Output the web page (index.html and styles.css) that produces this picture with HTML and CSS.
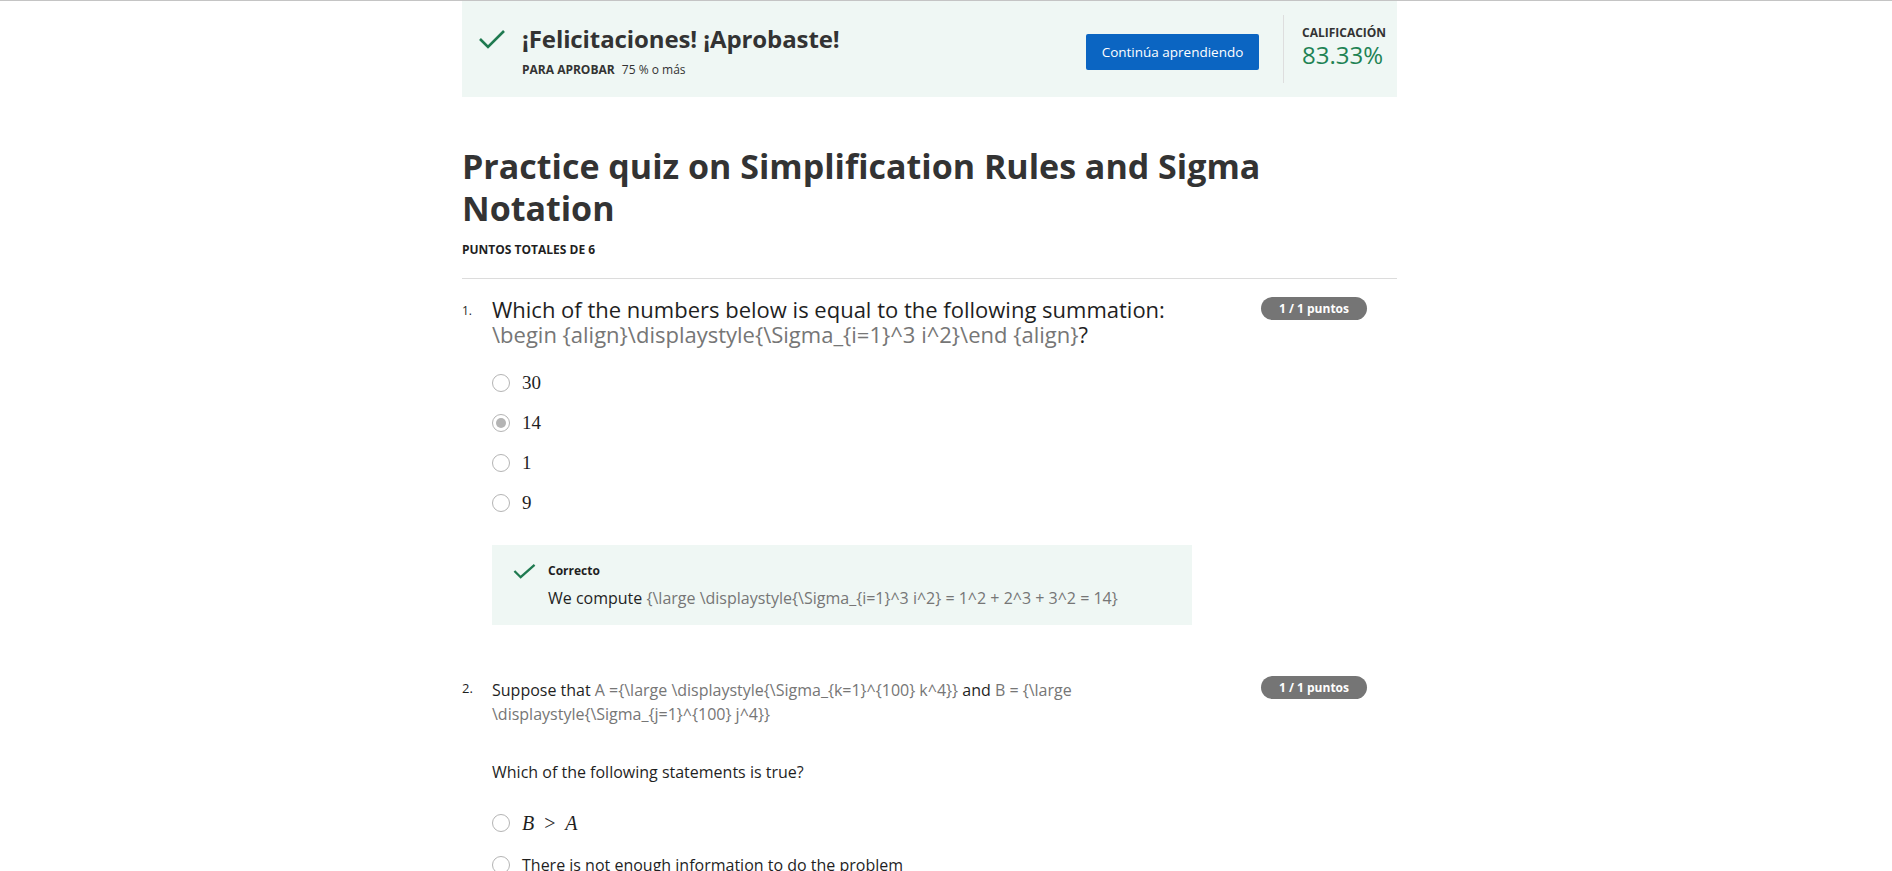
FILE: index.html
```html
<!DOCTYPE html>
<html lang="es">
<head>
<meta charset="utf-8">
<title>Practice quiz</title>
<link rel="stylesheet" href="styles.css">
</head>
<body>
<div class="topline"></div>
<main class="page">
  <section class="banner">
    <div class="banner-left">
      <svg class="check" viewBox="0 0 28 20" width="28" height="20"><polyline points="2,10 10,18 26,2" fill="none" stroke="#1f7a50" stroke-width="2.6"/></svg>
      <div>
        <h2 class="banner-title">¡Felicitaciones! ¡Aprobaste!</h2>
        <div class="banner-sub"><b>PARA APROBAR</b> 75 % o más</div>
      </div>
    </div>
    <div class="banner-right">
      <button class="btn">Continúa aprendiendo</button>
      <div class="vsep"></div>
      <div class="grade">
        <div class="grade-label">CALIFICACIÓN</div>
        <div class="grade-value">83.33%</div>
      </div>
    </div>
  </section>

  <h1 class="title">Practice quiz on Simplification Rules and Sigma Notation</h1>
  <div class="total">PUNTOS TOTALES DE 6</div>
  <hr class="rule">

  <section class="question">
    <div class="qnum">1.</div>
    <div class="qbody">
      <div class="qhead">
        <p class="qtext big">Which of the numbers below is equal to the following summation: <span class="tex">\begin {align}\displaystyle{\Sigma_{i=1}^3 i^2}\end {align}</span>?</p>
        <span class="badge">1 / 1 puntos</span>
      </div>
      <ul class="options">
        <li><span class="radio"></span><span class="math">30</span></li>
        <li><span class="radio checked"></span><span class="math">14</span></li>
        <li><span class="radio"></span><span class="math">1</span></li>
        <li><span class="radio"></span><span class="math">9</span></li>
      </ul>
      <div class="feedback">
        <div class="fb-head">
          <svg class="fb-check" viewBox="0 0 24 16" width="23" height="16"><polyline points="1.5,8 8,14.5 22.5,1.5" fill="none" stroke="#1f7a50" stroke-width="2.4"/></svg>
          <span class="fb-label">Correcto</span>
        </div>
        <p class="fb-text">We compute <span class="tex">{\large \displaystyle{\Sigma_{i=1}^3 i^2} = 1^2 + 2^3 + 3^2 = 14}</span></p>
      </div>
    </div>
  </section>

  <section class="question q2">
    <div class="qnum">2.</div>
    <div class="qbody">
      <div class="qhead">
        <p class="qtext">Suppose that <span class="tex">A ={\large \displaystyle{\Sigma_{k=1}^{100} k^4}}</span> and <span class="tex">B = {\large \displaystyle{\Sigma_{j=1}^{100} j^4}}</span></p>
        <span class="badge">1 / 1 puntos</span>
      </div>
      <p class="qtext ask">Which of the following statements is true?</p>
      <ul class="options opts2">
        <li><span class="radio"></span><span class="math it">B <span class="rel">&gt;</span> A</span></li>
        <li><span class="radio"></span><span class="plain">There is not enough information to do the problem</span></li>
      </ul>
    </div>
  </section>
</main>
</body>
</html>
```
FILE: styles.css
```css
* { box-sizing: border-box; }
html, body { margin: 0; padding: 0; background: #fff; }
body {
  font-family: "Open Sans", "Liberation Sans", sans-serif;
  color: #1f1f1f;
  overflow: hidden;
  height: 871px;
}
.topline { height: 1px; background: #c4c4c4; }
.page { width: 935px; margin-left: 462px; }

.banner {
  background: #eff7f4;
  height: 96px;
  display: flex;
  justify-content: space-between;
  align-items: center;
}
.banner-left { display: flex; align-items: flex-start; padding-left: 16px; padding-top: 2px; }
.check { margin-top: 6px; margin-right: 16px; }
.banner-title { margin: 0; font-size: 24px; font-weight: 700; color: #333; line-height: 32px; letter-spacing: -0.1px; }
.banner-sub { font-size: 12px; color: #333; margin-top: 6px; }
.banner-sub b { font-weight: 700; margin-right: 4px; }
.banner-right { display: flex; align-items: center; height: 100%; }
.btn {
  background: #0b65c2;
  color: #fff;
  border: 0;
  border-radius: 2px;
  width: 173px;
  height: 36px;
  font-family: "Open Sans", sans-serif;
  font-size: 13.5px;
  font-weight: 400;
  padding: 0;
  margin-top: 6px;
}
.vsep { width: 1px; height: 68px; background: #dedede; margin: 0 18px 0 24px; align-self: center; }
.grade { width: 95px; margin-top: -5px; }
.grade-label { font-size: 12px; font-weight: 700; color: #333; line-height: 16px; }
.grade-value { font-size: 24px; color: #1f8354; line-height: 28px; }

.title {
  margin: 48px 0 0;
  font-size: 34px;
  line-height: 42px;
  font-weight: 700;
  color: #333;
  width: 870px;
}
.total { font-size: 12px; font-weight: 700; color: #1f1f1f; margin-top: 12px; }
.rule { border: 0; border-top: 1px solid #dcdcdc; margin: 20px 0 0; }

.question { display: flex; margin-top: 18px; }
.qnum { width: 30px; font-size: 12px; color: #1f1f1f; padding-top: 5px; }
.q2 .qnum { font-size: 13px; padding-top: 1px; }
.qbody { flex: 1; }
.qhead { display: flex; justify-content: space-between; align-items: flex-start; }
.qtext { margin: 0; font-size: 16px; line-height: 24px; color: #1f1f1f; }
.qtext.big { font-size: 22px; line-height: 25px; width: 720px; }
.q2 .qhead .qtext { width: 600px; }
.tex { color: #767676; }
.badge {
  background: #757575;
  color: #fff;
  font-size: 12px;
  font-weight: 700;
  border-radius: 12px;
  width: 106px;
  height: 23px;
  line-height: 23px;
  text-align: center;
  margin-right: 30px;
  flex-shrink: 0;
}
.q2 .badge { margin-top: -2px; }

.options { list-style: none; margin: 16px 0 0; padding: 0; }
.options li { display: flex; align-items: center; height: 40px; }
.radio {
  width: 18px; height: 18px;
  border: 1.5px solid #b4b4b4;
  border-radius: 50%;
  margin-right: 12px;
  display: inline-flex;
  align-items: center;
  justify-content: center;
  flex-shrink: 0;
}
.radio.checked::after {
  content: "";
  width: 10px; height: 10px;
  border-radius: 50%;
  background: #b4b4b4;
}
.math { font-family: "Liberation Serif", "DejaVu Serif", serif; font-size: 19px; color: #1f1f1f; }
.math.it { font-style: italic; font-size: 20px; }
.rel { font-style: normal; margin: 0 5px; }
.plain { font-size: 16px; color: #1f1f1f; }

.feedback {
  background: #eff7f4;
  width: 700px;
  height: 80px;
  margin-top: 22px;
  padding: 17px 0 0 21px;
}
.fb-head { display: flex; align-items: center; }
.fb-check { margin-right: 12px; }
.fb-label { font-size: 12px; font-weight: 700; color: #1f1f1f; }
.fb-text { margin: 7px 0 0 35px; font-size: 16px; line-height: 24px; }

.q2 { margin-top: 53px; }
.ask { margin-top: 34px; }
.opts2 { margin-top: 18px; }
.opts2 li { height: 42px; }
```
